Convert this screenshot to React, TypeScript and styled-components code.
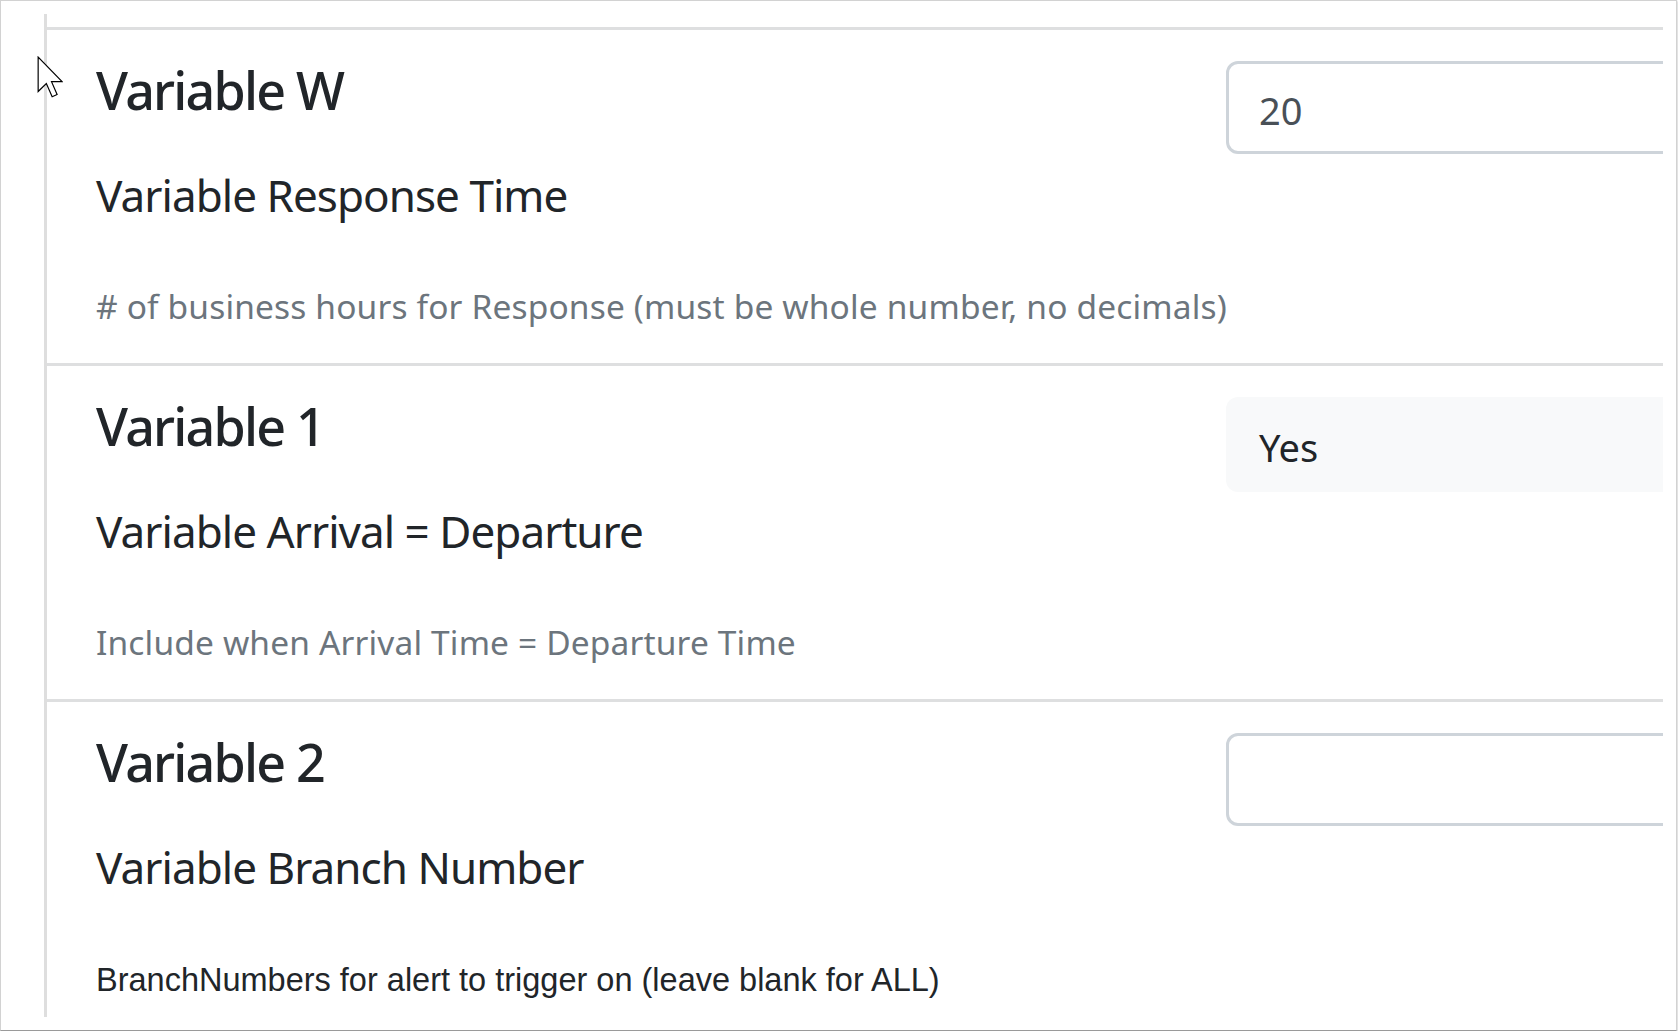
import React from "react";
import styled, { createGlobalStyle } from "styled-components";

type FieldType = {
  code: string;
  label: string;
  help: string;
  kind: "input" | "static";
  value: string;
  plainHelp?: boolean;
};

const fields: Array<FieldType> = [
  {
    code: "Variable W",
    label: "Variable Response Time",
    help: "# of business hours for Response (must be whole number, no decimals)",
    kind: "input",
    value: "20",
  },
  {
    code: "Variable 1",
    label: "Variable Arrival = Departure",
    help: "Include when Arrival Time = Departure Time",
    kind: "static",
    value: "Yes",
  },
  {
    code: "Variable 2",
    label: "Variable Branch Number",
    help: "BranchNumbers for alert to trigger on (leave blank for ALL)",
    kind: "input",
    value: "",
    plainHelp: true,
  },
];

export default function App() {
  return (
    <>
      <GlobalStyle />
      <Frame>
        <Panel>
          {fields.map((field) => (
            <Section key={field.code}>
              <LabelColumn>
                <Code>{field.code}</Code>
                <Label>{field.label}</Label>
                <Help $plain={field.plainHelp}>{field.help}</Help>
              </LabelColumn>
              <ValueColumn>
                {field.kind === "input" ? (
                  <TextInput readOnly value={field.value} />
                ) : (
                  <StaticValue>{field.value}</StaticValue>
                )}
              </ValueColumn>
            </Section>
          ))}
        </Panel>
        <Cursor viewBox="0 0 12 19.5" aria-hidden>
          <path
            d="M0.5 0.5 L0.5 16.5 L4.3 12.8 L7 18.9 L9.3 17.9 L6.7 11.9 L11.6 11.9 Z"
            fill="#fff"
            stroke="#000"
            strokeWidth="0.55"
            strokeLinejoin="miter"
          />
        </Cursor>
      </Frame>
    </>
  );
}

const GlobalStyle = createGlobalStyle`
  html, body {
    margin: 0;
    padding: 0;
    background: #ffffff;
  }
  body {
    font-family: "Noto Sans", "Open Sans", sans-serif;
    color: #212529;
  }
`;

const Frame = styled.div`
  position: relative;
  box-sizing: border-box;
  width: 1677px;
  height: 1031px;
  padding: 13px 0 0 43px;
  border: 1px solid #d2d2d2;
  border-bottom-color: #9a9a9a;
  box-shadow: 0 1px 2px rgba(0, 0, 0, 0.35);
  background: #ffffff;
  overflow: hidden;
`;

const Panel = styled.div`
  box-sizing: border-box;
  width: 1619px;
  height: 1003px;
  padding-top: 13px;
  border-left: 3px solid #dedede;
  overflow: hidden;
`;

const Section = styled.section`
  display: grid;
  grid-template-columns: 1130px 600px;
  align-items: start;
  padding: 28px 0 37px 49px;
  border-top: 3px solid #dedfe0;
`;

const LabelColumn = styled.div`
  display: flex;
  flex-direction: column;
`;

const Code = styled.h4`
  margin: 0;
  font-size: 52px;
  line-height: 64px;
  font-weight: 500;
  letter-spacing: -1.8px;
  color: #212529;
`;

const Label = styled.div`
  margin-top: 46px;
  font-size: 44px;
  line-height: 54px;
  font-weight: 400;
  letter-spacing: -0.95px;
  color: #212529;
  white-space: nowrap;
`;

const Help = styled.small<{ $plain?: boolean }>`
  display: block;
  margin-top: ${({ $plain }) => ($plain ? "66px" : "64px")};
  font-family: ${({ $plain }) =>
    $plain ? '"Liberation Sans", Arial, sans-serif' : '"Noto Sans", "Open Sans", sans-serif'};
  font-size: ${({ $plain }) => ($plain ? "32.5px" : "33.5px")};
  line-height: 40px;
  letter-spacing: ${({ $plain }) => ($plain ? "0" : "0.15px")};
  color: ${({ $plain }) => ($plain ? "#212529" : "#6c757d")};
  white-space: nowrap;
`;

const ValueColumn = styled.div`
  padding-top: 3px;
`;

const TextInput = styled.input`
  box-sizing: border-box;
  display: block;
  width: 600px;
  height: 93px;
  margin: 0;
  padding: 4px 30px 0;
  border: 3px solid #ced4da;
  border-radius: 12px;
  background: #ffffff;
  font-family: "Noto Sans", "Open Sans", sans-serif;
  font-size: 38px;
  color: #495057;
  outline: none;
`;

const StaticValue = styled.div`
  box-sizing: border-box;
  display: flex;
  align-items: center;
  width: 600px;
  height: 95px;
  padding: 4px 33px 0;
  border-radius: 12px;
  background: #f8f9fa;
  font-size: 38px;
  color: #212529;
`;

const Cursor = styled.svg`
  position: absolute;
  left: 36px;
  top: 55px;
  width: 26px;
  height: 42px;
  pointer-events: none;
`;
